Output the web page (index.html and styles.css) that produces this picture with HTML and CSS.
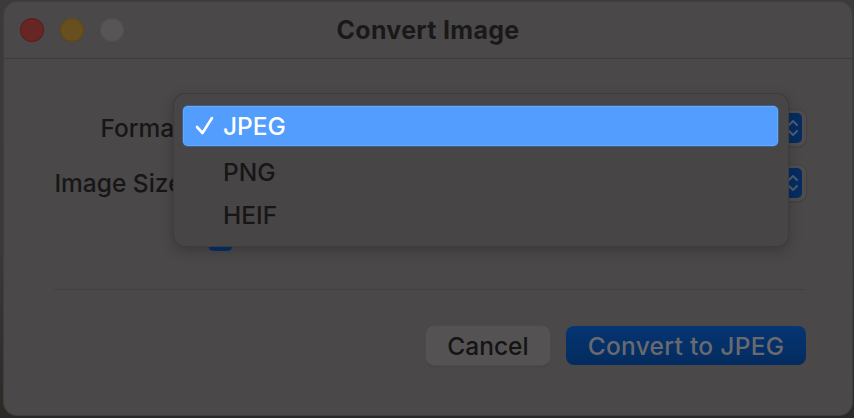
FILE: index.html
```html
<!DOCTYPE html>
<html>
<head>
<meta charset="utf-8">
<link rel="stylesheet" href="styles.css">
</head>
<body>
<div class="desktop">
  <div class="window">
    <div class="titlebar">
      <div class="lights">
        <span class="light red"></span>
        <span class="light yellow"></span>
        <span class="light gray"></span>
      </div>
      <div class="title">Convert Image</div>
      <div class="spacer"></div>
    </div>
    <div class="content">
      <div class="form">
        <div class="row">
          <div class="label">Format:</div>
          <div class="popup">
            <span class="stepper">
              <svg width="18" height="30" viewBox="0 0 18 30"><path d="M5 12 L9 8 L13 12 M5 18 L9 22 L13 18" fill="none" stroke="#4f5d73" stroke-width="2" stroke-linecap="round" stroke-linejoin="round"/></svg>
            </span>
          </div>
        </div>
        <div class="row">
          <div class="label">Image Size:</div>
          <div class="popup">
            <span class="stepper">
              <svg width="18" height="30" viewBox="0 0 18 30"><path d="M5 12 L9 8 L13 12 M5 18 L9 22 L13 18" fill="none" stroke="#4f5d73" stroke-width="2" stroke-linecap="round" stroke-linejoin="round"/></svg>
            </span>
          </div>
        </div>
        <div class="row check-row">
          <div class="label"></div>
          <div class="checkline">
            <span class="checkbox"></span>
          </div>
        </div>
      </div>
      <div class="separator"></div>
      <div class="buttons">
        <div class="btn cancel">Cancel</div>
        <div class="btn primary">Convert to JPEG</div>
      </div>
    </div>
    <div class="menu">
      <div class="item selected">
        <svg class="tick" width="22" height="22" viewBox="0 0 22 22"><path d="M3 12 L8.5 18 L18 3" fill="none" stroke="#ffffff" stroke-width="2.6" stroke-linecap="round" stroke-linejoin="round"/></svg>
        <span>JPEG</span>
      </div>
      <div class="item"><span>PNG</span></div>
      <div class="item"><span>HEIF</span></div>
    </div>
  </div>
</div>
</body>
</html>
```
FILE: styles.css
```css
* { box-sizing: border-box; }
html, body { margin: 0; padding: 0; }
body {
  width: 854px;
  height: 418px;
  overflow: hidden;
  background: #3a3939;
  font-family: Inter, "Noto Sans", sans-serif;
}
.desktop {
  width: 854px;
  height: 418px;
  padding: 2px 2px 3px 4px;
  background: linear-gradient(180deg, #3c3a3d 0%, #3a393a 60%, #2a2a26 100%);
}
.window {
  position: relative;
  width: 848px;
  height: 413px;
  background: #4a4849;
  border-radius: 13px;
  box-shadow: 0 0 0 1px #3f3d3e;
  display: flex;
  flex-direction: column;
}
.titlebar {
  height: 57px;
  border-bottom: 1px solid #3d3b3c;
  display: grid;
  grid-template-columns: 1fr auto 1fr;
  align-items: center;
  padding: 0 16px;
}
.lights { display: flex; gap: 16px; }
.light {
  width: 24px;
  height: 24px;
  border-radius: 50%;
  display: block;
}
.light.red { background: #672524; box-shadow: inset 0 0 0 1px #5a2120; }
.light.yellow { background: #684f1f; box-shadow: inset 0 0 0 1px #5b461b; }
.light.gray { background: #575556; box-shadow: inset 0 0 0 1px #4f4e4e; }
.title {
  font-weight: 700;
  font-size: 25px;
  color: #1a191a;
  letter-spacing: 0.3px;
}
.content {
  flex: 1;
  padding: 51px 46px 0 50px;
  display: flex;
  flex-direction: column;
}
.form { display: flex; flex-direction: column; gap: 19px; }
.row {
  display: flex;
  align-items: center;
  height: 36px;
}
.label {
  width: 136px;
  text-align: right;
  white-space: nowrap;
  font-size: 24.5px;
  font-weight: 500;
  color: #171617;
  flex: none;
}
.popup {
  margin-left: 6px;
  flex: 1;
  height: 36px;
  background: #4e4c4d;
  border-radius: 8px;
  box-shadow: 0 0 0 1px #444243, 0 1px 2px rgba(0,0,0,0.2);
  display: flex;
  align-items: center;
  justify-content: flex-end;
  padding: 0 4px 0 14px;
}
.stepper {
  width: 19px;
  height: 30px;
  background: #052d61;
  border-radius: 5px;
  display: flex;
  align-items: center;
  justify-content: center;
}
.check-row { margin-top: 7px; height: 24px; }
.checkline {
  margin-left: 18px;
  display: flex;
  align-items: center;
}
.checkbox {
  width: 25px;
  height: 24px;
  border-radius: 6px;
  background: #053169;
  display: block;
}
.separator {
  margin-top: 38px;
  height: 1px;
  background: #424041;
  margin-right: 1px;
}
.buttons {
  margin-top: 36px;
  display: flex;
  justify-content: flex-end;
  gap: 16px;
}
.btn {
  height: 39px;
  border-radius: 8px;
  font-size: 24.5px;
  font-weight: 500;
  display: flex;
  align-items: center;
  justify-content: center;
}
.cancel {
  width: 124px;
  background: #545253;
  color: #151415;
  box-shadow: 0 0 0 1px #4d4b4c, 0 1px 2px rgba(0,0,0,0.25);
}
.primary {
  width: 240px;
  background: linear-gradient(180deg, #053573 0%, #042b5e 100%);
  color: #6a6a6e;
  letter-spacing: 0.3px;
}
.menu {
  position: absolute;
  left: 170px;
  top: 92px;
  width: 614px;
  height: 152px;
  background: #474545;
  border-radius: 11px;
  box-shadow: 0 0 0 1px #3e3c3d, 0 4px 14px rgba(0,0,0,0.25);
  padding: 12px 10px 10px 9px;
  display: flex;
  flex-direction: column;
}
.item {
  height: 43px;
  display: flex;
  align-items: center;
  padding-left: 40px;
  font-size: 24.5px;
  font-weight: 500;
  color: #171617;
  position: relative;
}
.item.selected {
  height: 40px;
  margin-bottom: 4px;
  background: #529dfe;
  color: #ffffff;
  border-radius: 5px;
  box-shadow: 0 0 0 1px #3d5f8c, inset 0 0 0 1px #6aa8f4;
}
.tick {
  position: absolute;
  left: 11px;
  top: 9px;
}
```
